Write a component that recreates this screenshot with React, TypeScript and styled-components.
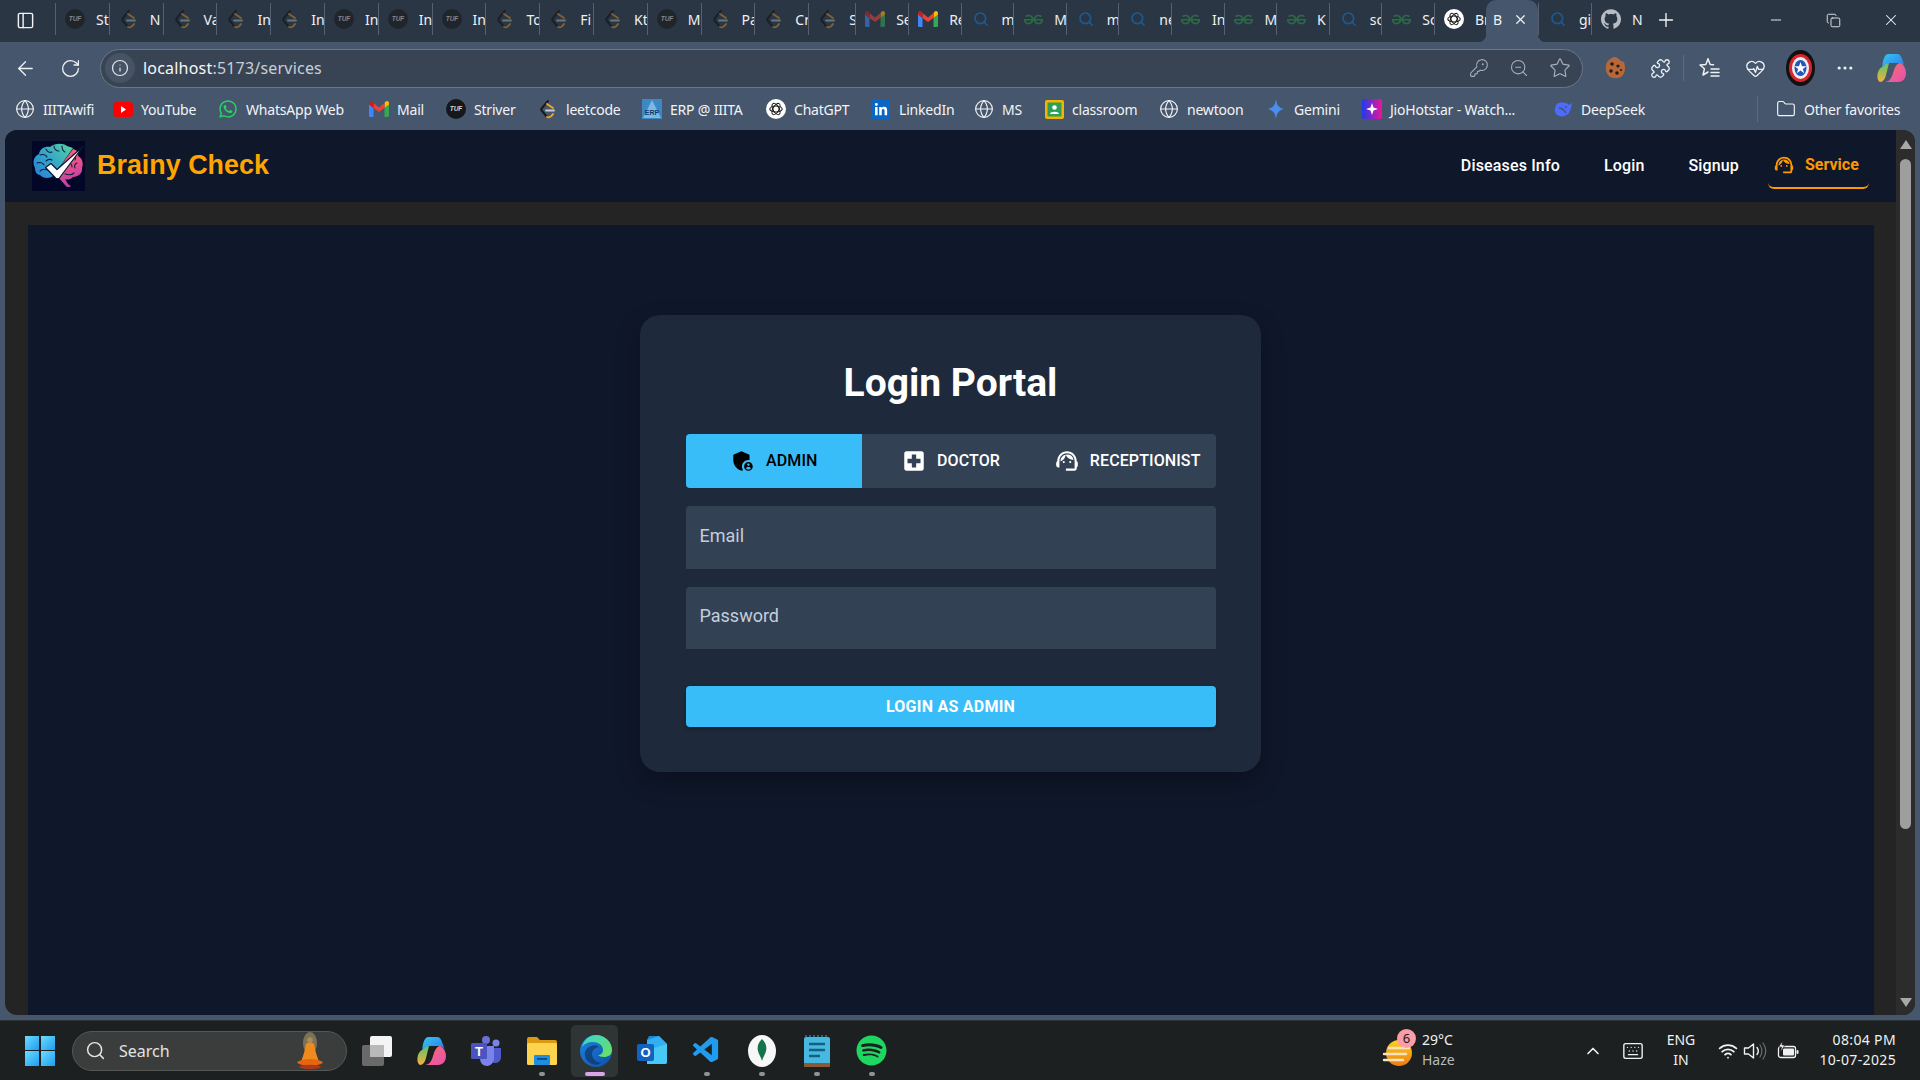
import React from "react";
import styled, { createGlobalStyle } from "styled-components";
import {
  ArrowLeft, RotateCw, Info, KeyRound, ZoomOut, Star, Puzzle, HeartPulse, MoreHorizontal,
  Globe, Folder, Plus, X, Minus, Copy, Search, ChevronUp, Keyboard, Wifi, PanelLeft,
} from "lucide-react";
import { MdAdminPanelSettings, MdLocalHospital, MdOutlineSupportAgent } from "react-icons/md";
import { SiGeeksforgeeks, SiGithub } from "react-icons/si";
import { FaSpotify, FaWhatsapp, FaLinkedinIn } from "react-icons/fa";
import { VscVscode } from "react-icons/vsc";

const Global = createGlobalStyle`
  html, body { margin: 0; padding: 0; background: #1c2020; overflow: hidden; }
  * { box-sizing: border-box; }
  #root { width: 1920px; height: 1080px; }
`;

const UI = `"Noto Sans", "Open Sans", sans-serif`;
const APP = `Roboto, "Liberation Sans", sans-serif`;

const Screen = styled.div`
  width: 1920px; height: 1080px; display: flex; flex-direction: column;
  font-family: ${UI}; color: #fff; overflow: hidden;
`;

/* ---------- tab strip ---------- */
const TabStrip = styled.div`
  height: 42px; background: #2b3644; display: flex; align-items: stretch; flex: none;
  padding-left: 16px;
`;
const SideToggle = styled.div`
  width: 39px; display: flex; align-items: center; color: #f1f3f5; padding-bottom: 2px;
`;
const Tab = styled.div<{ $w?: number }>`
  width: ${(p) => p.$w ?? 53}px; flex: none; display: flex; align-items: center; gap: 11px;
  padding-left: 9px; overflow: hidden; white-space: nowrap;
  font-size: 14px; color: #eef1f4;
  border-left: 1px solid #56606e;
  margin: 3px 0 7px;
`;
const ActiveTab = styled.div`
  width: 52px; flex: none; display: flex; align-items: center; gap: 11px; padding: 0 0 4px 7px;
  font-size: 14px; color: #eef1f4; background: #46566d; border-radius: 10px 10px 0 0; position: relative;
  &::before, &::after {
    content: ""; position: absolute; bottom: 0; width: 8px; height: 8px;
  }
  &::before { left: -8px; background: radial-gradient(circle at 0 0, transparent 8px, #46566d 8.5px); }
  &::after { right: -8px; background: radial-gradient(circle at 100% 0, transparent 8px, #46566d 8.5px); }
`;
const TabIcon = styled.span`
  width: 20px; height: 20px; flex: none; display: flex; align-items: center; justify-content: center;
`;
const TabText = styled.span`
  flex: none;
`;
const NewTab = styled.div`
  width: 44px; flex: none; display: flex; align-items: center; justify-content: center; color: #f1f3f5; padding-bottom: 2px;
`;
const WindowButtons = styled.div`
  margin-left: auto; display: flex; align-items: center; color: #f0f2f4; padding-bottom: 2px;
`;
const WindowButton = styled.div`
  width: 57.5px; display: flex; justify-content: center;
`;

/* ---------- toolbar ---------- */
const Toolbar = styled.div`
  height: 46px; background: #46566d; display: flex; align-items: center; flex: none;
  padding: 6px 0 0 14px; color: #eef1f4;
`;
const NavIcon = styled.div<{ $w: number }>`
  width: ${(p) => p.$w}px; flex: none; display: flex; align-items: center; color: #eef1f4;
`;
const AddressBar = styled.div`
  width: 1483px; height: 39px; margin-left: -4px; background: #384454; border: 1px solid #6a7787;
  border-radius: 20px; display: flex; align-items: center; padding: 0 11px 0 4px; flex: none;
`;
const InfoCircle = styled.div`
  width: 30px; height: 30px; border-radius: 50%; background: #465364; display: flex;
  align-items: center; justify-content: center; color: #e3e7ea; flex: none;
`;
const Url = styled.div`
  margin-left: 8px; font-size: 16px; color: #c9cfd6; letter-spacing: 0.2px;
  & b { color: #f6f7f8; font-weight: 400; }
`;
const AddressActions = styled.div`
  margin-left: auto; display: flex; gap: 20px; align-items: center; color: #a6afba;
`;
const ToolActions = styled.div`
  flex: none; width: 337px; display: flex; align-items: center; padding-left: 10px; color: #eef1f4;
`;
const ToolSlot = styled.div<{ $w: number }>`
  width: ${(p) => p.$w}px; flex: none; display: flex; justify-content: center; align-items: center;
`;
const ToolSep = styled.div`
  width: 1px; height: 26px; background: #5f6c7e; flex: none;
`;

/* ---------- bookmarks ---------- */
const Bookmarks = styled.div`
  height: 42px; background: #46566d; display: flex; align-items: center; flex: none;
  padding: 0 16px 0 15px; gap: 20px;
`;
const Bookmark = styled.div`
  display: flex; align-items: center; gap: 8px; font-size: 14px; color: #f2f4f6; white-space: nowrap;
`;
const BookmarkIcon = styled.span`
  width: 20px; height: 20px; flex: none; display: flex; align-items: center; justify-content: center;
  color: #f2f4f6;
`;
const BookmarkLabel = styled.span<{ $w: number }>`
  width: ${(p) => p.$w}px; flex: none; letter-spacing: -0.2px;
`;
const OtherFavorites = styled(Bookmark)`
  margin-left: auto; border-left: 1px solid #5f6c7e; padding-left: 18px; height: 26px;
`;

/* ---------- app viewport ---------- */
const Viewport = styled.div`
  flex: 1; min-height: 0; background: #46566d; padding: 0 5px 5px; display: flex;
`;
const Frame = styled.div`
  flex: 1; display: flex; border-radius: 12px; overflow: hidden; background: #242424;
`;
const AppPage = styled.div`
  flex: 1; min-width: 0; display: flex; flex-direction: column; font-family: ${APP};
`;
const Navbar = styled.div`
  height: 72px; background: #0f172a; flex: none; display: flex; align-items: center;
  padding: 0 27px 0 27px;
`;
const LogoBox = styled.div`
  width: 53px; height: 50px; flex: none; display: flex;
`;
const Brand = styled.div`
  font-family: "Liberation Sans", Arial, sans-serif; font-weight: 700; font-size: 26.9px;
  color: #ffa500; margin: 0 0 2px 12px;
`;
const NavLinks = styled.div`
  margin-left: auto; display: flex; align-items: center; height: 100%;
`;
const NavLink = styled.div`
  font-size: 16px; font-weight: 500; color: #fff; padding: 0 22px 2px; letter-spacing: 0.15px;
`;
const ActiveLink = styled.div`
  height: 45px; margin-left: 7px; width: 101px; display: flex; align-items: center; gap: 10px;
  padding: 0 0 1px 5px;
  color: #ff9800; font-size: 16px; font-weight: 700; border-bottom: 2px solid #ff9800;
  border-radius: 0 0 6px 6px; justify-content: flex-start;
`;
const MainArea = styled.div`
  flex: 1; min-height: 0; padding: 23px 22px 0 23px; display: flex;
`;
const MainPanel = styled.div`
  flex: 1; background: #0f172a; display: flex; flex-direction: column; align-items: center;
  padding: 90px 2px 0 0;
`;
const Card = styled.div`
  width: 621px; height: 457px; background: #1e293b; border-radius: 20px; padding: 46px 45px 45px 46px;
  box-shadow: 0 10px 25px rgba(0,0,0,0.3); display: flex; flex-direction: column;
`;
const Title = styled.h1`
  margin: 0 0 29px; font-size: 39px; line-height: 44px; font-weight: 700; text-align: center; color: #fff;
`;
const RoleTabs = styled.div`
  height: 54px; background: #334155; border-radius: 4px; display: flex; overflow: hidden; flex: none;
`;
const RoleTab = styled.div<{ $active?: boolean }>`
  flex: 1; display: flex; align-items: center; justify-content: center; gap: 10px; padding-bottom: 1px;
  background: ${(p) => (p.$active ? "#38bdf8" : "transparent")};
  color: ${(p) => (p.$active ? "#000" : "#fff")};
  font-size: 16px; font-weight: 500; text-transform: uppercase; letter-spacing: 0.1px;
`;
const Field = styled.div`
  height: 62.5px; flex: none; margin-top: 18px; background: #334155; border-radius: 4px 4px 0 0;
  padding: 0 14px 4px; display: flex; align-items: center; color: #c3cedd; font-size: 18px;
`;
const LoginButton = styled.div`
  height: 41px; flex: none; margin-top: 37px; background: #38bdf8; border-radius: 4px; color: #fff;
  display: flex; align-items: center; justify-content: center; font-weight: 700; font-size: 16px;
  text-transform: uppercase; letter-spacing: 0.25px;
  box-shadow: 0 2px 4px rgba(0,0,0,0.25);
`;
const Scrollbar = styled.div`
  width: 19px; flex: none; background: #2c2c2c; display: flex; flex-direction: column; align-items: center;
  padding: 10px 0 8px;
`;
const ScrollThumb = styled.div`
  width: 11px; height: 670px; background: #9e9e9e; border-radius: 6px; margin-top: 10px;
`;
const ScrollArrow = styled.div<{ $down?: boolean }>`
  width: 0; height: 0; border-left: 6px solid transparent; border-right: 6px solid transparent;
  ${(p) => (p.$down ? "border-top: 9px solid #a8a8a8; margin-top: auto;" : "border-bottom: 9px solid #a8a8a8;")}
`;

/* ---------- taskbar ---------- */
const Taskbar = styled.div`
  height: 60px; background: #1c2020; flex: none; display: flex; align-items: center; padding-left: 25px;
  border-top: 1px solid #2c3136;
`;
const StartLogo = styled.div`
  width: 30px; height: 30px; flex: none; display: grid; grid-template-columns: 1fr 1fr; gap: 1.5px;
`;
const StartPane = styled.span`
  background: linear-gradient(135deg, #6fdcff, #1b9df0);
`;
const SearchPill = styled.div`
  width: 275px; height: 40px; margin-left: 17px; border-radius: 20px; background: #3b3d3c; border: 1px solid #565856;
  display: flex; align-items: center; padding: 0 20px 0 12px; gap: 13px; color: #e4e4e4; font-size: 16px; flex: none;
`;
const SearchDecor = styled.span`
  margin-left: auto; display: flex;
`;
const TaskApps = styled.div`
  display: flex; margin-left: 2px;
`;
const TaskApp = styled.div`
  width: 55px; height: 52px; flex: none; display: flex; align-items: center; justify-content: center; position: relative;
`;
const TaskAppActive = styled(TaskApp)`
  width: 47px; margin: 0 6px 0 2px; padding-left: 3px; border-radius: 5px; background: #2f3434;
`;
const RunDot = styled.span<{ $active?: boolean }>`
  position: absolute; bottom: 1px; left: 50%; transform: translateX(-50%);
  width: ${(p) => (p.$active ? "20px" : "6px")}; height: 4px;
  border-radius: 2px; background: ${(p) => (p.$active ? "#d9a5e6" : "#8f9393")};
`;
const Tray = styled.div`
  margin-left: auto; display: flex; align-items: center; font-size: 14px; color: #f1f1f1; height: 100%;
`;
const WeatherIcon = styled.div`
  width: 40px; height: 40px; position: relative; flex: none; display: flex; align-items: center; padding-top: 4px;
`;
const Badge = styled.span`
  position: absolute; right: 6px; top: -2px; width: 19px; height: 19px; border-radius: 50%;
  background: #fb9ca6; color: #1a1a1a; font-size: 13px; display: flex; align-items: center; justify-content: center;
`;
const TwoLines = styled.div<{ $w: number; $align?: string; $spaced?: boolean }>`
  width: ${(p) => p.$w}px; flex: none; display: flex; flex-direction: column; gap: 2px; padding-bottom: 2px;
  align-items: ${(p) => p.$align ?? "flex-start"}; line-height: 18px;
  letter-spacing: ${(p) => (p.$spaced ? "0.35px" : "0")};
`;
const Dim = styled.span`
  color: #b9bcbc;
`;
const TrayIcon = styled.div<{ $w: number }>`
  width: ${(p) => p.$w}px; flex: none; display: flex; justify-content: center; align-items: center;
`;

/* ---------- icons ---------- */
const Tuf = ({ dim }: { dim?: boolean }) => (
  <svg width="20" height="20" viewBox="0 0 20 20">
    <circle cx="10" cy="10" r="10" fill={dim ? "#20252c" : "#15171a"} />
    <text x="10" y="12" textAnchor="middle" fontSize="6.5" fontStyle="italic" fontWeight="700" fill={dim ? "#83878c" : "#d8d8d8"} fontFamily="Liberation Sans">TUF</text>
  </svg>
);
const Gmail = ({ dim }: { dim?: boolean }) => (
  <svg width="20" height="16" viewBox="0 0 20 16" opacity={dim ? 0.55 : 1}>
    <path d="M0 3v11.500A1.500 1.500 0 0 0 1.500 16H4.500V7Z" fill="#4285f4" />
    <path d="M20 3v11.500a1.500 1.500 0 0 1-1.500 1.500H15.500V7Z" fill="#34a853" />
    <path d="M15.500 2v5L20 3.500V2a2 2 0 0 0-3.300-1.500Z" fill="#fbbc04" />
    <path d="M4.500 2 10 6.500 15.500 2v5L10 11 4.500 7Z" fill="#ea4335" />
    <path d="M0 2v1.500L4.500 7V2L3.300.5A2 2 0 0 0 0 2Z" fill="#c5221f" />
  </svg>
);
const Lens = () => <Search size={16} strokeWidth={2.4} color="#1d5a94" />;
const Gfg = () => <SiGeeksforgeeks size={19} color="#2a6b45" />;
const Lc = ({ dim }: { dim?: boolean }) => (
  <svg width="20" height="20" viewBox="0 0 20 20" fill="none" strokeLinecap="round" strokeLinejoin="round">
    <path d="M10 2 4 9c-1 1-1 2 0 3l5 6" stroke={dim ? "#1a2028" : "#17191c"} strokeWidth="2" />
    <path d="M9 5l6 4M9 18c2 1 4 0 6-3" stroke={dim ? "#7d6434" : "#f5a623"} strokeWidth="1.800" />
    <path d="M8 11.500h8" stroke={dim ? "#6d747d" : "#c9ccd0"} strokeWidth="1.800" />
  </svg>
);
const Gpt = () => (
  <svg width="20" height="20" viewBox="0 0 20 20">
    <circle cx="10" cy="10" r="10" fill="#fff" />
    <g fill="none" stroke="#1a1a1a" strokeWidth="1.100">
      <ellipse cx="10" cy="10" rx="6.200" ry="3" />
      <ellipse cx="10" cy="10" rx="6.200" ry="3" transform="rotate(60 10 10)" />
      <ellipse cx="10" cy="10" rx="6.200" ry="3" transform="rotate(120 10 10)" />
    </g>
  </svg>
);
const Logo = () => (
  <svg width="53" height="50" viewBox="0 0 53 50">
    <defs>
      <linearGradient id="brainL" x1="0" y1="0.8" x2="1" y2="0">
        <stop offset="0" stopColor="#2a86d6" />
        <stop offset="0.45" stopColor="#35a8c8" />
        <stop offset="1" stopColor="#58d49c" />
      </linearGradient>
      <linearGradient id="brainR" x1="0.2" y1="0" x2="0.5" y2="1">
        <stop offset="0" stopColor="#f06a70" />
        <stop offset="0.5" stopColor="#e6508e" />
        <stop offset="1" stopColor="#b83ea8" />
      </linearGradient>
    </defs>
    <rect width="53" height="50" fill="#030727" />
    <path d="M3 27C0 21 2 15 7 13 8 7 14 5 18 6 23 2 31 2 35 5l6 2L22 34c-3 4-11 4-14 0-3 0-5-3-5-7Z" fill="url(#brainL)" />
    <path d="M41 8c4 1 6 4 5 7 4 2 6 7 4 12 1 5-4 9-9 9-3 3-6 3-8 2l3 5 3 2c-2 2-5 1-6-1l-6-7-5-3Z" fill="url(#brainR)" />
    <path d="M8 14c3-1 6 0 7 2M14 8c1 3 4 4 6 3M22 5c0 3 2 5 5 5M30 5c0 3 1 5 3 6M5 22c3-1 6 0 7 2M8 30c2-2 5-2 7-1M14 20c2-2 5-2 6-1M41 14c2 1 3 3 2 5M45 22c-2 1-3 3-2 5M36 22c3 0 4 2 4 4M33 33c3 1 7 1 9-1" fill="none" stroke="#122240" strokeWidth="1.100" strokeLinecap="round" />
    <path d="M13.500 26.500 19 22.500l6 6L51 5.500 27 37.500h-3Z" fill="#fff" stroke="#0b1530" strokeWidth="1.200" strokeLinejoin="round" />
  </svg>
);
const Diamond = () => (
  <svg width="16" height="20" viewBox="0 0 16 20"><path d="M8 0c.8 6 2.500 8.500 8 10-5.500 1.500-7.200 4-8 10-.8-6-2.500-8.500-8-10C5.500 8.500 7.200 6 8 0Z" fill="#4a8ff0" /></svg>
);
const ErpIcon = () => (
  <svg width="20" height="20" viewBox="0 0 20 20">
    <rect width="20" height="20" fill="#3d87c4" />
    <path d="M10 1 19 19H1Z" fill="#7cb8e4" />
    <text x="10" y="16" textAnchor="middle" fontSize="7" fontWeight="700" fill="#123a66" fontFamily="Liberation Sans">ERP</text>
  </svg>
);
const Classroom = () => (
  <svg width="19" height="19" viewBox="0 0 19 19">
    <rect width="19" height="19" rx="2" fill="#f4b400" />
    <rect x="2.500" y="2.500" width="14" height="14" fill="#2f9e58" />
    <circle cx="9.500" cy="7.500" r="2.300" fill="#fff" />
    <path d="M5 14c0-3 9-3 9 0Z" fill="#fff" />
  </svg>
);
const Jio = () => (
  <svg width="20" height="20" viewBox="0 0 20 20">
    <defs><linearGradient id="jio" x1="0" x2="1"><stop offset="0" stopColor="#1c3cf0" /><stop offset="1" stopColor="#f0129a" /></linearGradient></defs>
    <rect width="20" height="20" rx="2" fill="url(#jio)" />
    <path d="M10 4l1.500 4.500L16 10l-4.500 1.500L10 16l-1.500-4.500L4 10l4.500-1.500Z" fill="#fff" />
  </svg>
);
const DeepSeek = () => (
  <svg width="19" height="16" viewBox="0 0 19 16">
    <path d="M18 2c-1 .5-2 1-3 2C12 1 6 1 3 3 0 6 0 11 3 14c3 2 8 2 11-1 2-2 3-5 4-11Z" fill="#4d6bfe" />
    <path d="M5 7c3 0 5 2 7 5" fill="none" stroke="#46566d" strokeWidth="1.500" />
    <circle cx="12" cy="6" r="1" fill="#46566d" />
  </svg>
);
const Cookie = () => (
  <svg width="22" height="24" viewBox="0 0 22 24">
    <path d="M11 1c2 0 3 2 4 2 1 2 3 2 5 3 2 6 1 12-3 15-4 2-10 2-13-2C1 15 1 8 4 5c2-2 4-4 7-4Z" fill="#b5683a" />
    <g fill="#2a1a12"><circle cx="8" cy="8" r="1.800" /><circle cx="14" cy="10" r="1.600" /><circle cx="7" cy="15" r="1.700" /><circle cx="13" cy="17" r="1.800" /><circle cx="17" cy="14" r="1.100" /></g>
  </svg>
);
const FavStar = () => (
  <svg width="22" height="22" viewBox="0 0 22 22" fill="none" stroke="currentColor" strokeWidth="1.500" strokeLinejoin="round" strokeLinecap="round">
    <path d="M9 2 6.800 7.500 1 8l4.400 3.800L4 18l5-3" />
    <path d="M9 2l2.200 5.500 3.300.3M12 12h8M12 15.500h8M12 19h8" />
  </svg>
);
const Shield = () => (
  <svg width="29" height="36" viewBox="0 0 29 36">
    <ellipse cx="14.500" cy="18" rx="14.500" ry="18" fill="#111" />
    <ellipse cx="14.500" cy="18" rx="11.500" ry="14" fill="#d8262c" />
    <ellipse cx="14.500" cy="18" rx="8.500" ry="11" fill="#eee" />
    <ellipse cx="14.500" cy="18" rx="6" ry="8" fill="#2456b8" />
    <path d="M14.500 12l1.500 4.300h4.400l-3.600 2.600 1.400 4.400-3.700-2.700-3.700 2.700 1.400-4.400-3.600-2.600H13Z" fill="#fff" />
  </svg>
);
const Copilot = ({ id }: { id: string }) => (
  <svg width="30" height="30" viewBox="0 0 30 30">
    <defs>
      <linearGradient id={id + "A"} x1="0" y1="0" x2="1" y2="1"><stop offset="0" stopColor="#34c6f4" /><stop offset="1" stopColor="#2f6fe4" /></linearGradient>
      <linearGradient id={id + "B"} x1="0" y1="1" x2="0" y2="0"><stop offset="0" stopColor="#f4b13c" /><stop offset="1" stopColor="#5cc46a" /></linearGradient>
      <linearGradient id={id + "C"} x1="0" y1="0" x2="1" y2="1"><stop offset="0" stopColor="#f5716d" /><stop offset="1" stopColor="#e94fb0" /></linearGradient>
    </defs>
    <path d="M11 1h9c3 0 4 2 5 5l3 8c-1-3-4-4-7-4H13C10 10 8 12 7 15l-1 3C4 12 7 1 11 1Z" fill={`url(#${id}A)`} />
    <path d="M7 13c1-2 3-3 5-3l-3 12c-1 4-3 7-6 7-3-2-3-6-2-10 1-3 3-5 6-6Z" fill={`url(#${id}B)`} />
    <path d="M23 10c3 1 6 5 6 10s-3 9-8 9H8c3 0 6-3 7-6l2-6c1-3 3-7 6-7Z" fill={`url(#${id}C)`} />
  </svg>
);
const TaskView = () => (
  <svg width="30" height="30" viewBox="0 0 30 30">
    <rect x="0" y="9" width="22" height="21" rx="2" fill="#6a6a6a" />
    <rect x="8" y="0" width="22" height="21" rx="2" fill="#f4f4f4" />
    <rect x="8" y="9" width="14" height="12" fill="#b9b9b9" />
  </svg>
);
const Teams = () => (
  <svg width="32" height="30" viewBox="0 0 32 30">
    <circle cx="25" cy="7" r="3.500" fill="#7b83eb" />
    <circle cx="15" cy="4" r="4" fill="#6a70d6" />
    <path d="M19 12h11v9c0 4-3 6-6 6-3 0-5-2-5-6Z" fill="#5059c9" />
    <path d="M9 10h14v12c0 4-3 8-7 8-4 0-7-3-7-8Z" fill="#7b83eb" />
    <rect x="0" y="7" width="16" height="16" rx="1.500" fill="#4b53bc" />
    <text x="8" y="20" textAnchor="middle" fontSize="13" fontWeight="700" fill="#fff" fontFamily="Liberation Sans">T</text>
  </svg>
);
const Explorer = () => (
  <svg width="30" height="28" viewBox="0 0 30 28">
    <path d="M0 2a2 2 0 0 1 2-2h8l3 3h15a2 2 0 0 1 2 2v4H0Z" fill="#d99a12" />
    <rect x="0" y="6" width="30" height="22" rx="1.500" fill="#fcd34d" />
    <rect x="7" y="18" width="16" height="10" rx="1" fill="#1d8ee0" />
    <rect x="10" y="21" width="10" height="1.800" fill="#0b4c86" />
  </svg>
);
const Edge = () => (
  <svg width="32" height="32" viewBox="0 0 32 32">
    <defs>
      <linearGradient id="edA" x1="0" y1="0" x2="1" y2="1"><stop offset="0" stopColor="#38d6d0" /><stop offset="1" stopColor="#6ee05a" /></linearGradient>
      <linearGradient id="edB" x1="0" y1="0" x2="1" y2="1"><stop offset="0" stopColor="#1e86e0" /><stop offset="1" stopColor="#0c4fa8" /></linearGradient>
    </defs>
    <circle cx="16" cy="16" r="16" fill="url(#edB)" />
    <path d="M2 12C4 4 10 0 16 0c9 0 16 7 16 15 0 5-4 7-8 7-3 0-5-1-6-2 3 0 5-2 5-5 0-5-5-8-10-8C8 7 4 9 2 12Z" fill="url(#edA)" />
    <path d="M12 19c0 4 3 8 9 9-3 2-6 2-9 1-5-2-8-7-7-12 1-3 3-5 6-6 3-1 6-1 8 1-3 0-7 3-7 7Z" fill="#0f2a55" opacity=".6" />
  </svg>
);
const Outlook = () => (
  <svg width="30" height="30" viewBox="0 0 30 30">
    <path d="M12 0h10l8 8v18a2 2 0 0 1-2 2H10V4Z" fill="#1a86d8" />
    <path d="M22 0l8 8-8 8-12-6V4Z" fill="#33aef0" />
    <path d="M10 14l20-6v18a2 2 0 0 1-2 2H10Z" fill="#48c8f4" />
    <rect x="0" y="8" width="17" height="17" rx="2" fill="#0f62c0" />
    <text x="8.500" y="21" textAnchor="middle" fontSize="13" fontWeight="700" fill="#fff" fontFamily="Liberation Sans">O</text>
  </svg>
);
const Compass = () => (
  <svg width="28" height="32" viewBox="0 0 28 32">
    <ellipse cx="14" cy="16" rx="14" ry="16" fill="#f7f7f7" />
    <path d="M14 4c4 4 5 8 4 12-1 4-3 6-4 10-1-4-3-6-4-10-1-4 0-8 4-12Z" fill="#13734b" />
  </svg>
);
const Notepad = () => (
  <svg width="26" height="32" viewBox="0 0 26 32">
    <rect y="2" width="26" height="30" rx="2" fill="#47b9e0" />
    <rect y="28" width="26" height="4" fill="#8a5a35" />
    <path d="M2 2V0m4 2V0m4 2V0m4 2V0m4 2V0m4 2V0" stroke="#1d7fa8" strokeWidth="1.500" />
    <path d="M5 9h16M5 15h16M5 21h11" stroke="#13617f" strokeWidth="2.500" />
  </svg>
);
const Buddha = () => (
  <svg width="32" height="38" viewBox="0 0 32 38">
    <ellipse cx="16" cy="11" rx="7" ry="11" fill="#d9c68a" opacity=".4" />
    <circle cx="16" cy="8" r="2.800" fill="#b08a50" />
    <path d="M12 12c2-2 6-2 8 0l2 9 3 9H7l3-9Z" fill="#ef8a1c" />
    <path d="M3 30c7-4 19-4 26 0-2 5-24 5-26 0Z" fill="#e8650e" />
    <ellipse cx="16" cy="35" rx="11" ry="2.200" fill="#a83a20" />
  </svg>
);
const WeatherGlyph = () => (
  <svg width="30" height="28" viewBox="0 0 30 28">
    <defs><linearGradient id="sun" x1="0" x2="0" y1="0" y2="1"><stop offset="0" stopColor="#ffd21f" /><stop offset="1" stopColor="#ec7a12" /></linearGradient></defs>
    <circle cx="17" cy="14" r="13" fill="url(#sun)" />
    <path d="M7 9h20M2 15h22M2 21h19" stroke="#f6e3c0" strokeWidth="2.400" strokeLinecap="round" />
  </svg>
);
const Speaker = () => (
  <svg width="24" height="20" viewBox="0 0 24 20" fill="none" strokeLinecap="round" strokeLinejoin="round">
    <path d="M1.500 7v6h4l5 4V3l-5 4Z" stroke="#f1f1f1" strokeWidth="1.400" />
    <path d="M14 6.500c1.500 2 1.500 5 0 7" stroke="#f1f1f1" strokeWidth="1.400" />
    <path d="M17 4c2.500 3.500 2.500 8.500 0 12M20 2c3.500 5 3.500 11 0 16" stroke="#6c6f6f" strokeWidth="1.200" />
  </svg>
);
const Battery = () => (
  <svg width="22" height="20" viewBox="0 0 22 20" fill="none">
    <rect x="1.500" y="5.500" width="17" height="11" rx="2" stroke="#f1f1f1" strokeWidth="1.300" />
    <rect x="6" y="7.500" width="11" height="7" rx="1" fill="#f1f1f1" />
    <rect x="19.500" y="9" width="2" height="4" rx="1" fill="#f1f1f1" />
    <path d="M5.500 0 1.500 6h3l-1 5 4.500-7H5Z" fill="#f1f1f1" stroke="#1c2020" strokeWidth="0.700" />
  </svg>
);
const Globe20 = () => <Globe size={20} strokeWidth={1.4} />;

const tabs: { icon: React.ReactNode; t: string; w: number }[] = [
  { icon: <Tuf dim />, t: "St", w: 53.8 }, { icon: <Lc dim />, t: "N", w: 53.8 }, { icon: <Lc dim />, t: "Va", w: 53.8 }, { icon: <Lc dim />, t: "In", w: 53.8 },
  { icon: <Lc dim />, t: "In", w: 53.8 }, { icon: <Tuf dim />, t: "In", w: 53.8 }, { icon: <Tuf dim />, t: "In", w: 53.8 }, { icon: <Tuf dim />, t: "In", w: 53.8 },
  { icon: <Lc dim />, t: "To", w: 53.8 }, { icon: <Lc dim />, t: "Fi", w: 53.8 }, { icon: <Lc dim />, t: "Kt", w: 53.8 }, { icon: <Tuf dim />, t: "M", w: 53.8 },
  { icon: <Lc dim />, t: "Pa", w: 53.8 }, { icon: <Lc dim />, t: "Cr", w: 53.8 }, { icon: <Lc dim />, t: "Su", w: 47 }, { icon: <Gmail dim />, t: "Se", w: 53 },
  { icon: <Gmail />, t: "Re", w: 52.4 }, { icon: <Lens />, t: "m", w: 52.6 }, { icon: <Gfg />, t: "M", w: 52.6 }, { icon: <Lens />, t: "m", w: 52.6 },
  { icon: <Lens />, t: "ne", w: 52.6 }, { icon: <Gfg />, t: "In", w: 52.6 }, { icon: <Gfg />, t: "M", w: 52.6 }, { icon: <Gfg />, t: "K", w: 52.6 },
  { icon: <Lens />, t: "sc", w: 52.6 }, { icon: <Gfg />, t: "Sc", w: 52.6 }, { icon: <Gpt />, t: "Br", w: 52 },
];

const marks: { icon: React.ReactNode; t: string; w: number }[] = [
  { icon: <Globe20 />, t: "IIITAwifi", w: 50 },
  { icon: <svg width="20" height="15" viewBox="0 0 20 15"><rect width="20" height="15" rx="4" fill="#f00" /><path d="M8 4l5 3.500L8 11Z" fill="#fff" /></svg>, t: "YouTube", w: 57 },
  { icon: <FaWhatsapp size={20} color="#25d366" />, t: "WhatsApp Web", w: 103 },
  { icon: <Gmail />, t: "Mail", w: 29 },
  { icon: <Tuf />, t: "Striver", w: 44 },
  { icon: <Lc />, t: "leetcode", w: 56 },
  { icon: <ErpIcon />, t: "ERP @ IIITA", w: 76 },
  { icon: <Gpt />, t: "ChatGPT", w: 57 },
  { icon: <svg width="18" height="20" viewBox="0 0 18 20"><rect width="18" height="20" rx="1" fill="#0a66c2" /><foreignObject x="2" y="3" width="14" height="14"><FaLinkedinIn size={14} color="#fff" /></foreignObject></svg>, t: "LinkedIn", w: 55 },
  { icon: <Globe20 />, t: "MS", w: 22 },
  { icon: <Classroom />, t: "classroom", w: 67 },
  { icon: <Globe20 />, t: "newtoon", w: 59 },
  { icon: <Diamond />, t: "Gemini", w: 48 },
  { icon: <Jio />, t: "JioHotstar - Watch...", w: 143 },
  { icon: <DeepSeek />, t: "DeepSeek", w: 66 },
];

export default function App() {
  return (
    <Screen>
      <Global />
      <TabStrip>
        <SideToggle><PanelLeft size={19} strokeWidth={1.8} /></SideToggle>
        {tabs.map((tab, i) => (
          <Tab key={i} $w={tab.w}><TabIcon>{tab.icon}</TabIcon><TabText>{tab.t}</TabText></Tab>
        ))}
        <ActiveTab><TabText>B</TabText><X size={15} /></ActiveTab>
        <Tab><TabIcon><Lens /></TabIcon><TabText>gi</TabText></Tab>
        <Tab><TabIcon><SiGithub size={20} color="#b8bcc2" /></TabIcon><TabText>N</TabText></Tab>
        <NewTab><Plus size={22} strokeWidth={1.5} /></NewTab>
        <WindowButtons>
          <WindowButton><Minus size={16} strokeWidth={1.4} /></WindowButton>
          <WindowButton><Copy size={15} strokeWidth={1.4} /></WindowButton>
          <WindowButton><X size={18} strokeWidth={1.4} /></WindowButton>
        </WindowButtons>
      </TabStrip>

      <Toolbar>
        <NavIcon $w={46}><ArrowLeft size={23} strokeWidth={1.4} /></NavIcon>
        <NavIcon $w={44}><RotateCw size={21} strokeWidth={1.5} /></NavIcon>
        <AddressBar>
          <InfoCircle><Info size={18} strokeWidth={1.6} /></InfoCircle>
          <Url><b>localhost</b>:5173/services</Url>
          <AddressActions>
            <KeyRound size={20} strokeWidth={1.3} />
            <ZoomOut size={20} strokeWidth={1.3} />
            <Star size={22} strokeWidth={1.3} />
          </AddressActions>
        </AddressBar>
        <ToolActions>
          <ToolSlot $w={44}><Cookie /></ToolSlot>
          <ToolSlot $w={46}><Puzzle size={21} strokeWidth={1.5} /></ToolSlot>
          <ToolSep />
          <ToolSlot $w={52}><FavStar /></ToolSlot>
          <ToolSlot $w={38}><HeartPulse size={21} strokeWidth={1.5} /></ToolSlot>
          <ToolSlot $w={52}><Shield /></ToolSlot>
          <ToolSlot $w={38}><MoreHorizontal size={20} strokeWidth={1.8} /></ToolSlot>
          <ToolSlot $w={56}><Copilot id="cpTop" /></ToolSlot>
        </ToolActions>
      </Toolbar>

      <Bookmarks>
        {marks.map((m) => (
          <Bookmark key={m.t}><BookmarkIcon>{m.icon}</BookmarkIcon><BookmarkLabel $w={m.w}>{m.t}</BookmarkLabel></Bookmark>
        ))}
        <OtherFavorites><BookmarkIcon><Folder size={20} strokeWidth={1.4} /></BookmarkIcon><BookmarkLabel $w={100}>Other favorites</BookmarkLabel></OtherFavorites>
      </Bookmarks>

      <Viewport>
        <Frame>
          <AppPage>
            <Navbar>
              <LogoBox><Logo /></LogoBox>
              <Brand>Brainy Check</Brand>
              <NavLinks>
                <NavLink>Diseases Info</NavLink>
                <NavLink>Login</NavLink>
                <NavLink>Signup</NavLink>
                <ActiveLink><MdOutlineSupportAgent size={22} />Service</ActiveLink>
              </NavLinks>
            </Navbar>
            <MainArea>
              <MainPanel>
                <Card>
                  <Title>Login Portal</Title>
                  <RoleTabs>
                    <RoleTab $active><MdAdminPanelSettings size={26} />Admin</RoleTab>
                    <RoleTab><MdLocalHospital size={26} />Doctor</RoleTab>
                    <RoleTab><MdOutlineSupportAgent size={26} />Receptionist</RoleTab>
                  </RoleTabs>
                  <Field>Email</Field>
                  <Field>Password</Field>
                  <LoginButton>Login as Admin</LoginButton>
                </Card>
              </MainPanel>
            </MainArea>
          </AppPage>
          <Scrollbar>
            <ScrollArrow />
            <ScrollThumb />
            <ScrollArrow $down />
          </Scrollbar>
        </Frame>
      </Viewport>

      <Taskbar>
        <StartLogo><StartPane /><StartPane /><StartPane /><StartPane /></StartLogo>
        <SearchPill>
          <Search size={21} strokeWidth={1.7} />
          Search
          <SearchDecor><Buddha /></SearchDecor>
        </SearchPill>
        <TaskApps>
          <TaskApp><TaskView /></TaskApp>
          <TaskApp><Copilot id="cpBar" /></TaskApp>
          <TaskApp><Teams /></TaskApp>
          <TaskApp><Explorer /><RunDot /></TaskApp>
          <TaskAppActive><Edge /><RunDot $active /></TaskAppActive>
          <TaskApp><Outlook /></TaskApp>
          <TaskApp><VscVscode size={31} color="#1f9cf0" /><RunDot /></TaskApp>
          <TaskApp><Compass /><RunDot /></TaskApp>
          <TaskApp><Notepad /><RunDot /></TaskApp>
          <TaskApp><FaSpotify size={31} color="#1ed760" /><RunDot /></TaskApp>
        </TaskApps>
        <Tray>
          <WeatherIcon><WeatherGlyph /><Badge>6</Badge></WeatherIcon>
          <TwoLines $w={144}><span>29°C</span><Dim>Haze</Dim></TwoLines>
          <TrayIcon $w={54}><ChevronUp size={20} strokeWidth={2} /></TrayIcon>
          <TrayIcon $w={26}><Keyboard size={22} strokeWidth={1.5} /></TrayIcon>
          <TwoLines $w={70} $align="center"><span>ENG</span><span>IN</span></TwoLines>
          <TrayIcon $w={24}><Wifi size={20} strokeWidth={2.2} /></TrayIcon>
          <TrayIcon $w={30}><Speaker /></TrayIcon>
          <TrayIcon $w={36}><Battery /></TrayIcon>
          <TwoLines $w={90} $align="flex-end" $spaced><span>08:04 PM</span><span>10-07-2025</span></TwoLines>
          <TrayIcon $w={24} />
        </Tray>
      </Taskbar>
    </Screen>
  );
}
